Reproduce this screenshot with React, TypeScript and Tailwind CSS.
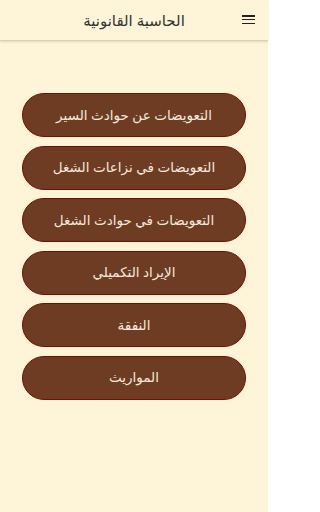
import React from "react";

const items = [
  "التعويضات عن حوادث السير",
  "التعويضات في نزاعات الشغل",
  "التعويضات في حوادث الشغل",
  "الإيراد التكميلي",
  "النفقة",
  "المواريث",
];

const App = () => {
  return (
    <div
      dir="rtl"
      className="min-h-[512px] w-[268px] bg-[#fef5d8]"
      style={{ fontFamily: '"Noto Sans", "DejaVu Sans", sans-serif' }}
    >
      <header className="relative flex h-[41px] items-center justify-center border-b border-[#d9d0b8] shadow-[0_1px_2px_rgba(0,0,0,0.12)]">
        <button className="absolute right-[13px] top-[15px] flex h-[9px] w-[13px] flex-col justify-between">
          <span className="block h-[1.5px] w-full bg-[#222]" />
          <span className="block h-[1.5px] w-full bg-[#222]" />
          <span className="block h-[1.5px] w-full bg-[#222]" />
        </button>
        <h1 className="text-[15px] text-[#333]">الحاسبة القانونية</h1>
      </header>
      <main className="flex flex-col gap-[8.5px] px-[22px] pt-[52px]">
        {items.map((label) => (
          <button
            key={label}
            className="flex h-[44px] w-full items-center justify-center rounded-full border border-[#7a0c00] bg-[#6e3c22] text-[13.5px] text-[#f3e9dc]"
          >
            {label}
          </button>
        ))}
      </main>
    </div>
  );
};

export default App;
